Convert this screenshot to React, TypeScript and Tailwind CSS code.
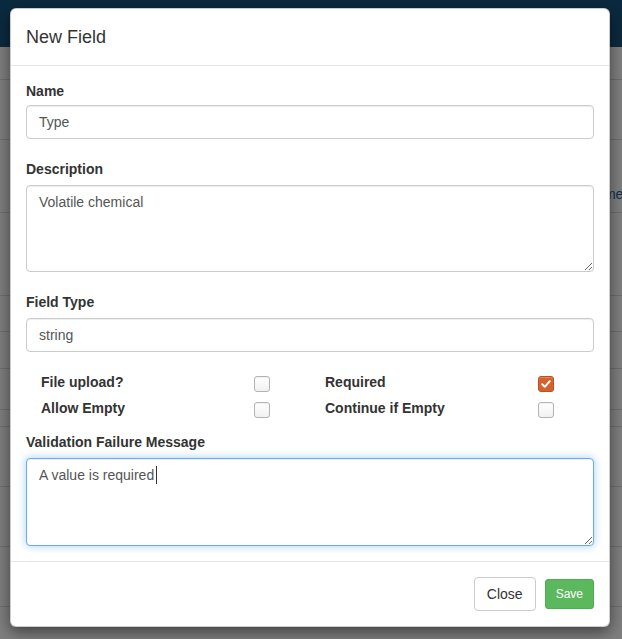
import React from "react";

type CheckProps = {
    checked?: boolean;
}

function Check(props: CheckProps) {
    if (props.checked) {
        return (
            <span className="flex h-4 w-4 items-center justify-center rounded-[3px] border border-[#b8501f] bg-[#d5622d] shadow-[inset_0_1px_1px_rgba(255,255,255,0.25)]">
                <svg width="12" height="12" viewBox="0 0 12 12" fill="none">
                    <path d="M2.2 6.3 L4.8 8.8 L9.8 3.2" stroke="#ffffff" strokeWidth="2" strokeLinecap="round" strokeLinejoin="round" />
                </svg>
            </span>
        )
    }
    return (
        <span className="block h-4 w-4 rounded-[3px] border border-[#b3b3b3] bg-gradient-to-b from-white to-[#f1f1f1] shadow-[inset_0_1px_1px_rgba(0,0,0,0.06)]"></span>
    )
}

type FlagProps = {
    label: string;
    checked?: boolean;
}

function Flag(props: FlagProps) {
    return (
        <>
            <span className="w-[213px] font-bold leading-5 text-[#333]">{props.label}</span>
            <span className="pt-1">
                <Check checked={props.checked} />
            </span>
        </>
    )
}

function Background() {
    const rows = [33, 60, 73, 83, 36, 37, 41, 17, 60, 60, 60, 60];
    return (
        <div className="absolute inset-0">
            <div className="h-[47px] bg-[#16547f]"></div>
            <div className="bg-white">
                {rows.map((h, i) => (
                    <div key={i} className="border-b border-[#dddddd] pl-[586px] text-[14px] text-[#2a6496]" style={{ height: h }}>
                        {i === 2 ? <div className="pt-[44px]">Name</div> : null}
                    </div>
                ))}
            </div>
            <div className="absolute inset-0 bg-black/50"></div>
        </div>
    )
}

const inputCls = "block h-[34px] w-full rounded-[4px] border border-[#cccccc] bg-white px-3 text-[14px] text-[#555] shadow-[inset_0_1px_1px_rgba(0,0,0,0.075)] outline-none";
const areaBase = "block w-full rounded-[4px] border bg-white px-3 py-[6px] text-[14px] leading-5 text-[#555] outline-none";

export default function App() {
    return (
        <div className="relative h-[639px] w-full overflow-hidden font-['Liberation_Sans',Arial,sans-serif] text-[14px] text-[#333]">
            <Background />
            <div className="absolute left-[10px] top-[8px] w-[600px] rounded-[6px] border border-black/20 bg-white shadow-[0_5px_15px_rgba(0,0,0,0.5)]">
                <div className="border-b border-[#e5e5e5] px-[15px] py-[15px]">
                    <h4 className="text-[18px] leading-[26px] text-[#333]">New Field</h4>
                </div>
                <div className="px-[15px] pb-[15px] pt-[15px]">
                    <div className="mb-5">
                        <label className="mb-[4px] block font-bold leading-5">Name</label>
                        <input className={inputCls} defaultValue="Type" readOnly />
                    </div>
                    <div className="mb-5">
                        <label className="mb-[6px] block font-bold leading-5">Description</label>
                        <textarea className={areaBase + " h-[87px] border-[#cccccc] shadow-[inset_0_1px_1px_rgba(0,0,0,0.075)]"} defaultValue="Volatile chemical" readOnly />
                    </div>
                    <div className="mb-5">
                        <label className="mb-[6px] block font-bold leading-5">Field Type</label>
                        <input className={inputCls} defaultValue="string" readOnly />
                    </div>
                    <div className="mb-[8px]">
                        <div className="flex h-[26px] pl-[15px]">
                            <Flag label="File upload?" />
                            <span className="w-[55px]"></span>
                            <Flag label="Required" checked />
                        </div>
                        <div className="flex h-[26px] pl-[15px]">
                            <Flag label="Allow Empty" />
                            <span className="w-[55px]"></span>
                            <Flag label="Continue if Empty" />
                        </div>
                    </div>
                    <div>
                        <label className="mb-[6px] block font-bold leading-5">Validation Failure Message</label>
                        <div className="relative">
                            <textarea className={areaBase + " h-[88px] border-[#66afe9] shadow-[inset_0_1px_1px_rgba(0,0,0,0.075),0_0_8px_rgba(102,175,233,0.6)]"} defaultValue="A value is required" readOnly />
                            <span className="absolute left-[130px] top-[8px] h-[18px] w-px bg-[#333]"></span>
                        </div>
                    </div>
                </div>
                <div className="flex items-center justify-end border-t border-[#e5e5e5] p-[15px]">
                    <button className="h-[34px] rounded-[4px] border border-[#cccccc] bg-white px-3 text-[14px] text-[#333]">Close</button>
                    <button className="ml-[9px] h-[30px] rounded-[3px] border border-[#4cae4c] bg-[#5cb85c] px-[10px] text-[12px] text-white">Save</button>
                </div>
            </div>
        </div>
    )
}
